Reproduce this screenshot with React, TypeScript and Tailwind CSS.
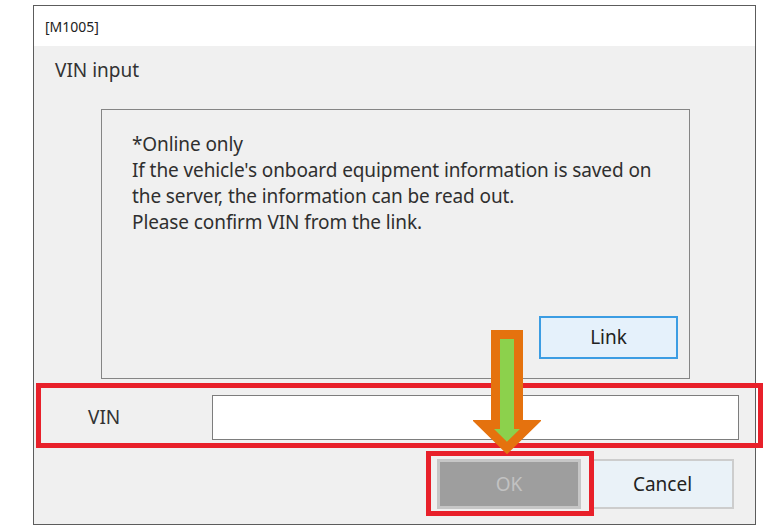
export default function App() {
  return (
    <div
      className="relative w-[778px] h-[530px] bg-white pl-[33px] pt-[5px] text-[#262626]"
      style={{ fontFamily: '"Noto Sans", "Open Sans", sans-serif' }}
    >
      {/* dialog window */}
      <div className="w-[723px] h-[520px] border border-[#5c5c5c] flex flex-col">
        <div className="h-[40px] bg-white pl-[11px] flex items-center text-[14px] text-[#222]">[M1005]</div>
        <div className="flex-1 bg-[#f0f0f0] flex flex-col">
          <div className="pl-[21px] pt-[12px] text-[19px] leading-[24px] text-[#333]">VIN input</div>

          <div className="ml-[67px] mt-[27px] w-[589px] h-[270px] border border-[#858585] flex flex-col pl-[30px] pt-[21px]">
            <div className="text-[19px] leading-[26px] tracking-[-0.1px] text-[#2f2f2f]">
              <div>*Online only</div>
              <div>If the vehicle's onboard equipment information is saved on</div>
              <div>the server, the information can be read out.</div>
              <div>Please confirm VIN from the link.</div>
            </div>
            <button className="mt-auto self-end mr-[11px] mb-[19px] w-[139px] h-[43px] border-2 border-[#3c9de3] bg-[#e5f1fb] text-[19px] text-[#222]">
              Link
            </button>
          </div>

          <div className="mt-[16px] flex items-center h-[45px]">
            <div className="w-[178px] pl-[54px] text-[19px] text-[#333]">VIN</div>
            <div className="w-[527px] h-[45px] border border-[#7d7d7d] bg-white" />
          </div>

          <div className="mt-[19px] flex justify-end gap-[10px] pr-[21px]">
            <button className="w-[144px] h-[50px] border-[3px] border-[#c6c6c6] bg-[#9e9e9e] text-[19px] text-[#c2c2c2]">
              OK
            </button>
            <button className="w-[143px] h-[50px] border-2 border-[#cdcdcd] bg-[#eaf2f8] text-[19px] text-[#222]">
              Cancel
            </button>
          </div>
        </div>
      </div>

      {/* annotations */}
      <div className="absolute left-[36px] top-[383px] w-[727px] h-[65px] border-[5px] border-[#e8202a]" />
      <div className="absolute left-[426px] top-[451px] w-[168px] h-[65px] border-[5px] border-[#e8202a]" />
      <svg className="absolute left-[473px] top-[330px]" width="68" height="126" viewBox="0 0 68 126">
        <path
          d="M22.5 4.5 L45.5 4.5 L45.5 94.5 L58 94.5 L34 118 L10 94.5 L22.5 94.5 Z"
          fill="#8cd14c"
          stroke="#e5720e"
          strokeWidth="9"
          strokeLinejoin="miter"
          strokeMiterlimit="4"
        />
      </svg>
    </div>
  );
}
